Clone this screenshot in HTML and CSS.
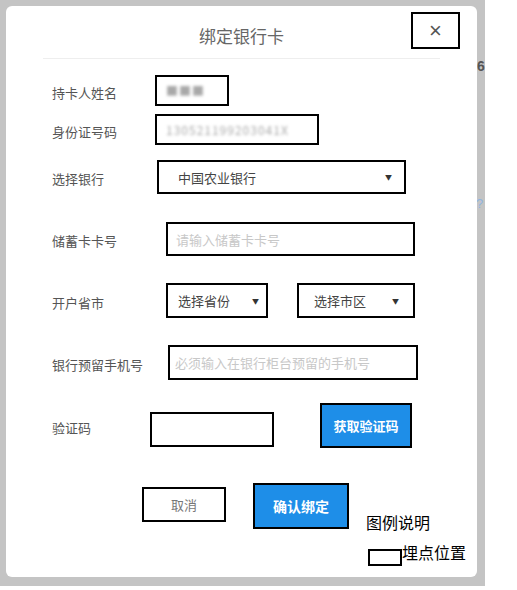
FILE: index.html
```html
<!DOCTYPE html>
<html>
<head>
<meta charset="utf-8">
<title>绑定银行卡</title>
<link rel="stylesheet" href="styles.css">
</head>
<body>
<div class="backdrop">
  <span class="peek peek-six">6</span>
  <span class="peek peek-q">?</span>

  <div class="modal">
    <div class="modal-head">
      <div class="modal-title">绑定银行卡</div>
      <div class="modal-close">&times;</div>
    </div>
    <div class="divider"></div>

    <div class="form">
      <div class="row row-name">
        <div class="label">持卡人姓名</div>
        <div class="field f-name"><span class="blur">■■■</span></div>
      </div>

      <div class="row row-id">
        <div class="label">身份证号码</div>
        <div class="field f-id"><span class="blur">130521199203041X</span></div>
      </div>

      <div class="row row-bank">
        <div class="label">选择银行</div>
        <div class="field select f-bank"><span>中国农业银行</span><span class="arrow">▼</span></div>
      </div>

      <div class="row row-card">
        <div class="label">储蓄卡卡号</div>
        <div class="field f-card"><span class="ph">请输入储蓄卡卡号</span></div>
      </div>

      <div class="row row-area">
        <div class="label">开户省市</div>
        <div class="field select f-prov"><span>选择省份</span><span class="arrow">▼</span></div>
        <div class="field select f-city"><span>选择市区</span><span class="arrow">▼</span></div>
      </div>

      <div class="row row-phone">
        <div class="label">银行预留手机号</div>
        <div class="field f-phone"><span class="ph">必须输入在银行柜台预留的手机号</span></div>
      </div>

      <div class="row row-code">
        <div class="label">验证码</div>
        <div class="field f-code"></div>
        <div class="btn btn-blue btn-sms">获取验证码</div>
      </div>

      <div class="row row-actions">
        <div class="btn btn-cancel">取消</div>
        <div class="btn btn-blue btn-ok">确认绑定</div>
      </div>
    </div>

    <div class="legend">
      <div class="legend-title">图例说明</div>
      <div class="legend-item"><span class="legend-box"></span><span>埋点位置</span></div>
    </div>
  </div>
</div>
</body>
</html>
```

FILE: styles.css
```css
/* bind bank card dialog */

body
{ margin: 0;
background: #fff;
font-family: "Noto Sans CJK SC", "Noto Sans", sans-serif;
}

div.backdrop
{ position: relative;
box-sizing: border-box;
width: 485px;
height: 586px;
padding: 6px 8px 9px 6px;
background: #c4c4c4;
}

span.peek
{ position: absolute;
font-family: "Liberation Sans", sans-serif;
font-size: 14px;
font-weight: bold;
}

span.peek-six { left: 477px; top: 58px; color: #555; }
span.peek-q { left: 476px; top: 196px; color: #8fb4e0; font-weight: normal; font-size: 13px; }

div.modal
{ position: relative;
height: 100%;
background: #fff;
border-radius: 6px;
}

/* Header */

div.modal-head
{ display: grid;
grid-template-columns: 1fr auto 1fr;
box-sizing: border-box;
height: 52px;
padding: 6px 17px 0;
}

div.modal-title
{ grid-column: 2;
margin-top: 14px;
line-height: 20px;
font-size: 17px;
color: #666;
}

div.modal-close
{ grid-column: 3;
justify-self: end;
box-sizing: border-box;
width: 49px;
height: 37px;
border: 2px solid #000;
text-align: center;
line-height: 33px;
font-family: "Liberation Sans", sans-serif;
font-size: 22px;
color: #555;
}

div.divider
{ margin: 0 37px;
border-top: 1px solid #eee;
}

/* Form rows */

div.form
{ padding: 16px 0 0 46px;
}

div.row
{ display: flex;
align-items: center;
}

div.label
{ flex: none;
width: 103px;
padding-top: 3px;
font-size: 13px;
color: #555;
}

div.field
{ box-sizing: border-box;
display: flex;
align-items: center;
border: 2px solid #000;
font-size: 13px;
color: #444;
}

div.select
{ justify-content: space-between;
}

span.arrow
{ font-size: 7px;
color: #333;
}

span.ph
{ color: #c8c8c8;
}

span.blur
{ color: #a8a8a8;
filter: blur(1.4px);
font-size: 12px;
letter-spacing: 1px;
}

div.row-name { height: 31px; }
div.row-id { height: 31px; margin-top: 8px; }
div.row-bank { height: 34px; margin-top: 15px; }
div.row-card { height: 34px; margin-top: 28px; }
div.row-area { height: 35px; margin-top: 27px; }
div.row-phone { height: 35px; margin-top: 27px; }
div.row-code { height: 45px; margin-top: 23px; align-items: flex-start; }
div.row-actions { height: 45px; margin-top: 35px; align-items: flex-start; }

div.f-name { width: 74px; height: 31px; padding-left: 9px; }
div.f-id { width: 164px; height: 31px; padding-left: 9px; }
div.f-bank { width: 249px; height: 34px; margin-left: 2px; padding: 0 12px 0 19px; }
div.f-card { width: 249px; height: 34px; margin-left: 11px; padding-left: 8px; }
div.f-prov { width: 102px; height: 35px; margin-left: 11px; padding: 0 7px 0 10px; }
div.f-city { width: 118px; height: 35px; margin-left: 29px; padding: 0 14px 0 15px; }
div.f-phone { width: 250px; height: 35px; margin-left: 13px; padding-left: 5px; }
div.f-code { width: 124px; height: 35px; margin-left: -5px; margin-top: 9px; }

div.row-code div.label { padding-top: 15px; }

/* Buttons */

div.btn
{ box-sizing: border-box;
display: flex;
align-items: center;
justify-content: center;
border: 2px solid #000;
font-size: 13px;
}

div.btn-blue
{ background: #1e8ee8;
color: #fff;
font-weight: bold;
}

div.btn-sms { width: 92px; height: 45px; margin-left: 46px; }
div.btn-cancel { width: 84px; height: 35px; margin-left: 90px; margin-top: 4px; color: #777; }
div.btn-ok { width: 96px; height: 46px; margin-left: 27px; font-size: 14px; }

/* Annotation legend */

div.legend
{ position: absolute;
left: 360px;
top: 504px;
font-size: 16px;
color: #000;
}

div.legend-item
{ display: flex;
align-items: flex-start;
margin-top: 6px;
margin-left: 2px;
}

span.legend-box
{ box-sizing: border-box;
width: 34px;
height: 17px;
margin-top: 9px;
border: 2px solid #000;
}
```
